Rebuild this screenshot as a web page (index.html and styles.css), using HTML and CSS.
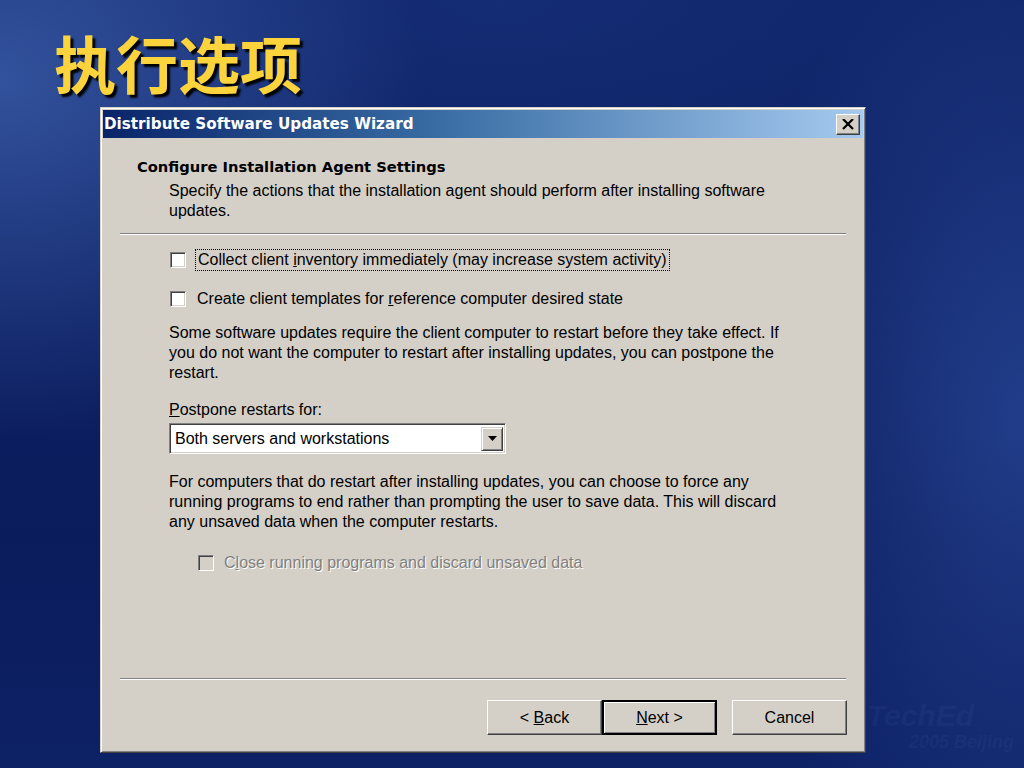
FILE: index.html
```html
<html>
<head>
    <title>执行选项</title>
    <link rel="stylesheet" href="styles.css">
</head>
<body>
    <div class="slide">
        <h1 class="slide-title">执行选项</h1>

        <div class="dialog">
            <div class="title-bar">
                <span class="title-text">Distribute Software Updates Wizard</span>
                <span class="close-btn">
                    <svg width="12" height="11" viewBox="0 0 12 11">
                        <path d="M1 0 L11 10 M11 0 L1 10" stroke="#000" stroke-width="2.2" fill="none"/>
                    </svg>
                </span>
            </div>

            <div class="wizard-head">
                <div class="head-title">Configure Installation Agent Settings</div>
                <div class="head-sub">Specify the actions that the installation agent should perform after installing software updates.</div>
            </div>
            <div class="separator"></div>

            <div class="wizard-body">
                <div class="check-row first">
                    <span class="check-box"></span>
                    <span class="check-label focused">Collect client <u>i</u>nventory immediately (may increase system activity)</span>
                </div>
                <div class="check-row second">
                    <span class="check-box"></span>
                    <span class="check-label">Create client templates for <u>r</u>eference computer desired state</span>
                </div>

                <p class="info one">Some software updates require the client computer to restart before they take effect. If you do not want the computer to restart after installing updates, you can postpone the restart.</p>

                <div class="field-label"><u>P</u>ostpone restarts for:</div>
                <div class="combo">
                    <span class="combo-text">Both servers and workstations</span>
                    <span class="combo-arrow">
                        <svg width="9" height="5" viewBox="0 0 9 5"><path d="M0 0 H9 L4.5 5 Z" fill="#000"/></svg>
                    </span>
                </div>

                <p class="info two">For computers that do restart after installing updates, you can choose to force any running programs to end rather than prompting the user to save data. This will discard any unsaved data when the computer restarts.</p>

                <div class="check-row disabled">
                    <span class="check-box"></span>
                    <span class="check-label">C<u>l</u>ose running programs and discard unsaved data</span>
                </div>
            </div>

            <div class="separator"></div>
            <div class="button-row">
                <span class="btn"><span>&lt; <u>B</u>ack</span></span>
                <span class="btn default"><span><u>N</u>ext &gt;</span></span>
                <span class="btn cancel"><span>Cancel</span></span>
            </div>
        </div>

        <div class="watermark">
            <div class="wm-big">TechEd</div>
            <div class="wm-small">2005 Beijing</div>
        </div>
    </div>
</body>
</html>
```

FILE: styles.css
```css
body {
    margin: 0;
    width: 1024px;
    height: 768px;
    overflow: hidden;
    font-family: "Liberation Sans", Arial, sans-serif;
    background-color: #0c1f62;
    background-image:
        radial-gradient(ellipse 420px 360px at 0px 80px, rgba(80, 120, 200, 0.55), rgba(80, 120, 200, 0) 100%),
        radial-gradient(ellipse 300px 500px at 1024px 420px, rgba(60, 100, 190, 0.45), rgba(60, 100, 190, 0) 100%),
        radial-gradient(ellipse 600px 260px at 500px 0px, rgba(30, 60, 140, 0.35), rgba(30, 60, 140, 0) 100%),
        linear-gradient(180deg, #0f2468 0%, #0b1c5c 70%, #0d2165 100%);
}

.slide {
    position: relative;
    height: 768px;
}

.slide-title {
    margin: 0;
    height: 107px;
    box-sizing: border-box;
    padding: 26px 0 0 54px;
    font-family: "Noto Sans CJK SC", sans-serif;
    font-weight: 700;
    font-size: 62px;
    line-height: 72px;
    color: #fbd33c;
    text-shadow: 3px 3px 2px #000;
}

/* dialog window */
.dialog {
    margin-left: 100px;
    width: 766px;
    height: 646px;
    box-sizing: border-box;
    padding: 2px;
    background: #d4d0c8;
    border-top: 1px solid #d4d0c8;
    border-left: 1px solid #d4d0c8;
    border-right: 1px solid #404040;
    border-bottom: 1px solid #404040;
    box-shadow: inset 1px 1px #fff, inset -1px -1px #808080;
    display: flex;
    flex-direction: column;
}

.title-bar {
    height: 28px;
    display: flex;
    align-items: center;
    justify-content: space-between;
    padding: 0 3px 0 1px;
    background: linear-gradient(90deg, #0a246a 0%, #3a6ea5 45%, #a6caf0 100%);
}

.title-text {
    color: #fff;
    font-family: "DejaVu Sans", sans-serif;
    font-weight: bold;
    font-size: 15.2px;
}

.close-btn {
    width: 24px;
    height: 21px;
    box-sizing: border-box;
    display: flex;
    align-items: center;
    justify-content: center;
    background: #d4d0c8;
    border-top: 1px solid #fff;
    border-left: 1px solid #fff;
    border-right: 1px solid #404040;
    border-bottom: 1px solid #404040;
    box-shadow: inset -1px -1px #808080;
}

.wizard-head {
    padding: 20px 0 0 34px;
}

.head-title {
    font-family: "DejaVu Sans", sans-serif;
    font-weight: bold;
    font-size: 14.7px;
    line-height: 18px;
}

.head-sub {
    margin-top: 5px;
    padding-left: 32px;
    width: 610px;
    font-size: 16px;
    line-height: 20px;
}

.separator {
    margin: 12px 17px 0 17px;
    height: 1px;
    border-bottom: 1px solid #fff;
    background: #808080;
}

.wizard-body {
    flex: 1;
    padding-left: 66px;
    font-size: 16px;
}

.check-row {
    display: flex;
    align-items: center;
    height: 22px;
}

.check-row.first {
    margin-top: 14px;
}

.check-row.second {
    margin-top: 17px;
}

.check-box {
    width: 16px;
    height: 16px;
    box-sizing: border-box;
    margin-left: 1px;
    margin-right: 9px;
    background: #fff;
    border-top: 1px solid #808080;
    border-left: 1px solid #808080;
    border-right: 1px solid #fff;
    border-bottom: 1px solid #fff;
    box-shadow: inset 1px 1px #404040, inset -1px -1px #d4d0c8;
}

.check-label {
    padding: 1px 2px;
    line-height: 18px;
}

.check-label.focused {
    border: 1px dotted #000;
}

.info {
    margin: 0;
    width: 625px;
    line-height: 20px;
}

.info.one {
    margin-top: 13px;
}

.info.two {
    margin-top: 18px;
}

.field-label {
    margin-top: 17px;
    line-height: 20px;
}

.combo {
    margin-top: 3px;
    width: 337px;
    height: 31px;
    box-sizing: border-box;
    display: flex;
    align-items: center;
    justify-content: space-between;
    background: #fff;
    border-top: 1px solid #808080;
    border-left: 1px solid #808080;
    border-right: 1px solid #fff;
    border-bottom: 1px solid #fff;
    box-shadow: inset 1px 1px #404040, inset -1px -1px #d4d0c8;
    padding: 2px 2px 2px 5px;
}

.combo-arrow {
    width: 22px;
    height: 24px;
    box-sizing: border-box;
    display: flex;
    align-items: center;
    justify-content: center;
    background: #d4d0c8;
    border-top: 1px solid #d4d0c8;
    border-left: 1px solid #d4d0c8;
    border-right: 1px solid #404040;
    border-bottom: 1px solid #404040;
    box-shadow: inset 1px 1px #fff, inset -1px -1px #808080;
}

.check-row.disabled {
    margin-top: 20px;
    margin-left: 28px;
    color: #808080;
    text-shadow: 1px 1px #fff;
}

.check-row.disabled .check-box {
    background: #d4d0c8;
}

.check-row.disabled .check-label {
    padding-left: 1px;
}

.button-row {
    display: flex;
    justify-content: flex-end;
    padding: 20px 16px 15px 0;
}

.btn {
    width: 115px;
    height: 35px;
    box-sizing: border-box;
    display: flex;
    align-items: center;
    justify-content: center;
    font-size: 16px;
    background: #d4d0c8;
    border-top: 1px solid #fff;
    border-left: 1px solid #fff;
    border-right: 1px solid #404040;
    border-bottom: 1px solid #404040;
    box-shadow: inset -1px -1px #808080;
}

.btn.default {
    border: 2px solid #000;
    box-shadow: inset 1px 1px #fff, inset -1px -1px #808080;
}

.btn.cancel {
    margin-left: 15px;
}

/* faint conference mark behind the dialog corner */
.watermark {
    position: absolute;
    right: 10px;
    bottom: 16px;
    text-align: right;
    font-family: "Liberation Sans", Arial, sans-serif;
    font-weight: bold;
    font-style: italic;
    color: rgba(120, 150, 220, 0.07);
}

.wm-big {
    font-size: 30px;
    line-height: 32px;
    margin-right: 40px;
}

.wm-small {
    font-size: 18px;
    line-height: 20px;
}
```
